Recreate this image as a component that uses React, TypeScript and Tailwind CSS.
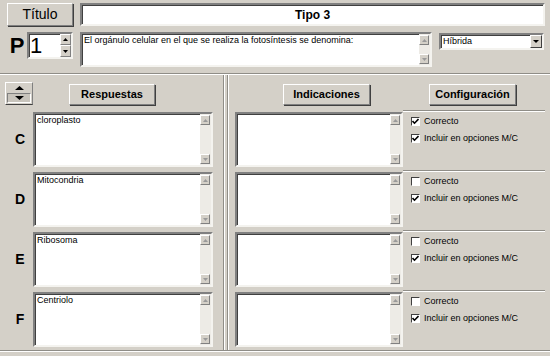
import React from "react";

const raised =
  "border border-t-white border-l-white border-r-[#808080] border-b-[#808080] shadow-[1px_1px_0_#404040] bg-[#d4d0c8]";
const sunken =
  "border-2 border-t-[#808080] border-l-[#808080] border-r-[#f4f3ef] border-b-[#f4f3ef] shadow-[inset_1px_1px_0_#404040] bg-white";

function Tri({ up, color = "#808080", w = 6, h = 3 }: { up?: boolean; color?: string; w?: number; h?: number }) {
  const pts = up ? `0,${h} ${w},${h} ${w / 2},0` : `0,0 ${w},0 ${w / 2},${h}`;
  return (
    <svg width={w} height={h} viewBox={`0 0 ${w} ${h}`} className="block">
      <polygon points={pts} fill={color} />
    </svg>
  );
}

function ArrowBox({ up }: { up?: boolean }) {
  return (
    <div className="flex h-[10px] w-[10px] items-center justify-center border border-t-white border-l-white border-r-[#808080] border-b-[#808080] bg-[#d4d0c8]">
      <Tri up={up} w={5} h={3} color="#9a9a9a" />
    </div>
  );
}

function TextBox({ className, text }: { className: string; text?: string }) {
  return (
    <div className={`flex ${sunken} ${className}`}>
      <div className="flex-1 px-[2px] pt-[1px] text-[9px] leading-[11px] text-black">{text}</div>
      <div className="flex w-[11px] flex-col justify-between bg-[#edebe6] py-px">
        <ArrowBox up />
        <ArrowBox />
      </div>
    </div>
  );
}

function Button({ className, children }: { className: string; children: React.ReactNode }) {
  return <div className={`flex items-center justify-center ${raised} ${className}`}>{children}</div>;
}

function Check({ checked, label }: { checked: boolean; label: string }) {
  return (
    <div className="flex items-center gap-[4px] text-[9px] leading-[11px]">
      <div className="flex h-[9px] w-[9px] items-center justify-center border border-t-[#404040] border-l-[#404040] border-r-white border-b-white bg-white">
        {checked && (
          <svg width="7" height="7" viewBox="0 0 7 7" className="block">
            <path d="M0.5 3 L2.5 5.2 L6.5 1" stroke="#000" strokeWidth="1.6" fill="none" />
          </svg>
        )}
      </div>
      {label}
    </div>
  );
}

const rows = [
  { letter: "C", text: "cloroplasto", correct: true },
  { letter: "D", text: "Mitocondria", correct: false },
  { letter: "E", text: "Ribosoma", correct: false },
  { letter: "F", text: "Centriolo", correct: false },
];

export default function App() {
  return (
    <div className="h-[356px] w-[550px] overflow-hidden bg-[#d4d0c8] font-['Liberation_Sans',Arial,sans-serif] text-black">
      <div className="pl-[7px] pr-[5px] pt-[3px]">
        <div className="flex h-[23px] gap-[7px]">
          <Button className="w-[66px] text-[14px]">Título</Button>
          <div className={`flex flex-1 items-center justify-center text-[12px] font-bold ${sunken}`}>Tipo 3</div>
        </div>
        <div className="mt-[6px] flex h-[35px] items-start">
          <div className="w-[20px] pt-[3px] text-center text-[22px] font-bold leading-none">P</div>
          <div className={`flex h-[27px] w-[46px] ${sunken}`}>
            <div className="flex-1 pl-[1px] pt-[1px] text-[22px] leading-none">1</div>
            <div className="flex w-[11px] flex-col">
              <div className="flex h-[11px] items-center justify-center border border-t-white border-l-white border-r-[#808080] border-b-[#808080] bg-[#d4d0c8]">
                <Tri up color="#000" w={5} h={3} />
              </div>
              <div className="flex h-[12px] items-center justify-center border border-t-white border-l-white border-r-[#808080] border-b-[#808080] bg-[#d4d0c8]">
                <Tri color="#000" w={5} h={3} />
              </div>
            </div>
          </div>
          <TextBox
            className="ml-[7px] h-[35px] w-[352px]"
            text="El orgánulo celular en el que se realiza la fotosíntesis se denomina:"
          />
          <div className={`ml-[7px] mt-px flex h-[17px] w-[105px] ${sunken}`}>
            <div className="flex-1 pl-[2px] text-[9px] leading-[13px]">Híbrida</div>
            <div className="flex w-[12px] items-center justify-center border border-t-white border-l-white border-r-[#404040] border-b-[#404040] bg-[#d4d0c8]">
              <Tri color="#000" w={6} h={3} />
            </div>
          </div>
        </div>
      </div>

      <div className="mt-[6px] h-px bg-[#8f8d87]" />
      <div className="h-px bg-white" />

      <div className="flex h-[275px]">
        <div className="w-[223px]">
          <div className="flex items-start pt-[7px]">
            <div className="ml-[5px] flex h-[23px] w-[28px] flex-col border border-t-white border-l-white border-r-[#808080] border-b-[#404040]">
              <div className="flex flex-1 items-center justify-center">
                <Tri up color="#000" w={9} h={4} />
              </div>
              <div className="mx-px mb-px flex h-[10px] items-center justify-center border border-t-[#808080] border-l-[#808080] border-r-white border-b-white bg-[#c8c4bc]">
                <Tri color="#000" w={9} h={4} />
              </div>
            </div>
            <Button className="ml-[36px] mt-[2px] h-[21px] w-[86px] text-[11px] font-bold">Respuestas</Button>
          </div>
          <div className="mt-[7px] flex flex-col gap-[5px]">
            {rows.map((r) => (
              <div key={r.letter} className="flex h-[55px]">
                <div className="flex w-[33px] items-center justify-center pl-[7px] text-[14px] font-bold">{r.letter}</div>
                <TextBox className="h-[55px] w-[180px]" text={r.text} />
              </div>
            ))}
          </div>
        </div>

        <div className="flex w-[6px]">
          <div className="w-px bg-[#8f8d87]" />
          <div className="w-px bg-white" />
          <div className="w-[2px]" />
          <div className="w-px bg-[#8f8d87]" />
          <div className="w-px bg-white" />
        </div>

        <div className="flex-1">
          <div className="flex pt-[9px]">
            <Button className="ml-[54px] h-[21px] w-[87px] text-[11px] font-bold">Indicaciones</Button>
            <Button className="ml-[59px] h-[21px] w-[87px] text-[11px] font-bold">Configuración</Button>
          </div>
          <div className="mt-[7px] flex flex-col gap-[5px]">
            {rows.map((r) => (
              <div key={r.letter} className="flex h-[55px]">
                <TextBox className="ml-[6px] h-[55px] w-[168px]" />
                <div className="-mt-[2px] w-[142px] border-t border-[#8f8d87] shadow-[inset_0_1px_0_white]">
                  <div className="flex flex-col gap-[6px] pl-[8px] pt-[5px]">
                    <Check checked={r.correct} label="Correcto" />
                    <Check checked label="Incluir en opciones M/C" />
                  </div>
                </div>
              </div>
            ))}
          </div>
        </div>
      </div>

      <div className="h-px bg-[#8f8d87]" />
      <div className="h-px bg-white" />
    </div>
  );
}
